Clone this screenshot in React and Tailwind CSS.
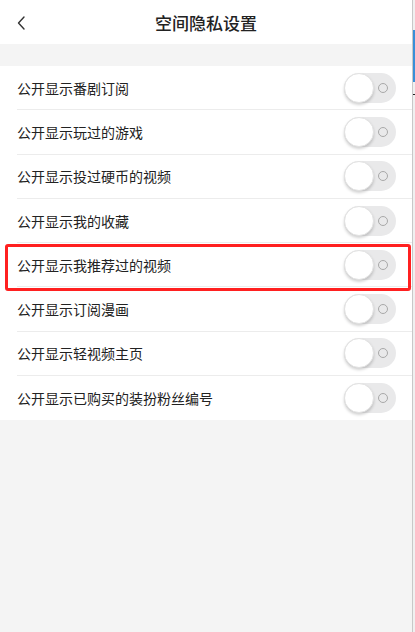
import React, { useState } from 'react';

const items = [
  '公开显示番剧订阅',
  '公开显示玩过的游戏',
  '公开显示投过硬币的视频',
  '公开显示我的收藏',
  '公开显示我推荐过的视频',
  '公开显示订阅漫画',
  '公开显示轻视频主页',
  '公开显示已购买的装扮粉丝编号',
];

function Toggle({ on, onClick }) {
  return (
    <button
      onClick={onClick}
      className={`relative w-[52px] h-[30px] rounded-full shrink-0 ${on ? 'bg-[#fb7299]' : 'bg-[#e9e9ea]'}`}
    >
      <span className="absolute right-[8px] top-1/2 -translate-y-1/2 w-[10px] h-[10px] rounded-full border border-[#a8a8a8]" />
      <span
        className={`absolute top-0 w-[30px] h-[30px] rounded-full bg-white border border-[#e2e2e2] shadow-[0_2px_3px_rgba(0,0,0,0.18)] ${on ? 'left-[22px]' : 'left-0'}`}
      />
    </button>
  );
}

export default function App() {
  const [values, setValues] = useState(items.map(() => false));

  const flip = (i) => setValues(values.map((v, j) => (j === i ? !v : v)));

  return (
    <div className="flex w-[415px] h-[632px] bg-[#f4f4f4] font-['Noto_Sans_CJK_SC',sans-serif] text-[#222]">
      <div className="w-[412px] flex flex-col">
        <div className="h-[44px] bg-white flex items-center relative">
          <button className="absolute left-[16px] top-[15px] w-[10px] h-[15px] flex items-center justify-center">
            <svg width="8" height="14" viewBox="0 0 8 14" fill="none">
              <path d="M7 1 L1.5 7 L7 13" stroke="#333" strokeWidth="1.4" strokeLinecap="round" strokeLinejoin="round" />
            </svg>
          </button>
          <h1 className="w-full text-center text-[17px] font-medium leading-none">空间隐私设置</h1>
        </div>

        <div className="h-[22px]" />

        <div className="bg-white">
          {items.map((label, i) => (
            <div key={label} className="relative h-[44.3px] pl-[17px]">
              <div className={`h-full flex items-center justify-between pr-[16px] ${i < items.length - 1 ? 'border-b border-[#ececec]' : ''}`}>
                <span className="text-[14px] leading-none">{label}</span>
                <Toggle on={values[i]} onClick={() => flip(i)} />
              </div>
              {i === 4 && (
                <div className="absolute left-[5px] right-[1px] top-[1px] bottom-[-4px] border-[3px] border-[#ff2020] rounded-[3px] pointer-events-none" />
              )}
            </div>
          ))}
        </div>
      </div>
      <div className="w-[1px] bg-[#c8c8c8]" />
      <div className="w-[2px] flex flex-col bg-[#f0f0f0]">
        <div className="h-[30px]" />
        <div className="h-[52px] bg-[#3a8fd8]" />
        <div className="h-[12px]" />
        <div className="h-[1px] bg-[#222]" />
      </div>
    </div>
  );
}
